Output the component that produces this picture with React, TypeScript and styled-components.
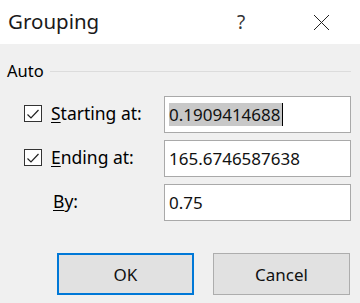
import styled, { createGlobalStyle } from 'styled-components'

const Global = createGlobalStyle`
	html, body {
		margin: 0;
		padding: 0;
		background: #f0f0f0;
	}
	body {
		font-family: 'Noto Sans', 'Open Sans', sans-serif;
		color: #000;
	}
`

const Dialog = styled.div`
	width: 360px;
	height: 303px;
	display: flex;
	flex-direction: column;
	background: #f0f0f0;
	overflow: hidden;
`

const TitleBar = styled.div`
	height: 44px;
	display: flex;
	align-items: center;
	background: #fff;
	padding-left: 8px;
`

const Title = styled.div`
	flex: 1;
	font-size: 20.5px;
	color: #1a1a1a;
	margin-top: -2px;
`

const TitleButton = styled.div`
	width: ${(p: { $w: number }) => p.$w}px;
	height: 44px;
	display: flex;
	align-items: center;
	justify-content: center;
	font-size: 19px;
	color: #333;
`

const Body = styled.div`
	flex: 1;
	display: flex;
	flex-direction: column;
	padding: 16px 9px 0 7px;
`

const Legend = styled.div`
	display: flex;
	align-items: center;
	gap: 6px;
	font-size: 16.5px;
	height: 20px;

	&::after {
		content: '';
		flex: 1;
		height: 1px;
		background: #dcdcdc;
		margin-top: 2px;
	}
`

const Fields = styled.div`
	display: grid;
	grid-template-columns: 17px 18px 122px 187px;
	grid-auto-rows: 37px;
	row-gap: 7px;
	align-items: center;
	margin-top: 16px;
`

const Check = styled.div`
	grid-column: 2;
	width: 16px;
	height: 15px;
	border: 1px solid #333;
	background: #fff;
	display: flex;
	align-items: center;
	justify-content: center;
	margin-bottom: 2px;
`

const Label = styled.div<{ $indent?: number }>`
	grid-column: 3;
	font-size: 17.5px;
	padding-left: ${(p) => 9 + (p.$indent ?? 0)}px;
	margin-bottom: 3px;

	u {
		text-decoration-thickness: 1px;
		text-underline-offset: 2px;
	}
`

const Field = styled.div`
	grid-column: 4;
	height: 37px;
	box-sizing: border-box;
	border: 1px solid #a9a9a9;
	background: #fff;
	display: flex;
	align-items: center;
	padding-left: 4px;
	font-size: 17px;
	color: #111;
`

const Selected = styled.span`
	background: #c8c8c8;
	border-right: 1px solid #000;
	padding-right: 1px;
`

const Buttons = styled.div`
	display: flex;
	justify-content: flex-end;
	gap: 19px;
	margin-top: 32px;
	padding-right: 1px;
`

const Button = styled.div<{ $primary?: boolean }>`
	width: 137px;
	height: 42px;
	box-sizing: border-box;
	background: #e1e1e1;
	border: ${(p) => (p.$primary ? '2px solid #0078d7' : '1px solid #adadad')};
	display: flex;
	align-items: center;
	justify-content: center;
	font-size: 17px;
	color: #111;
`

const Tick = () => (
	<svg width="14" height="12" viewBox="0 0 14 12">
		<path d="M1.5 6.5 L5 10 L12.5 2" fill="none" stroke="#222" strokeWidth="1.2" />
	</svg>
)

const Close = () => (
	<svg width="17" height="17" viewBox="0 0 17 17">
		<path d="M1 1 L16 16 M16 1 L1 16" stroke="#222" strokeWidth="1" />
	</svg>
)

const App = () => (
	<>
		<Global />
		<Dialog>
			<TitleBar>
				<Title>Grouping</Title>
				<TitleButton $w={20}>?</TitleButton>
				<TitleButton $w={47} />
				<TitleButton $w={46}>
					<Close />
				</TitleButton>
				<TitleButton $w={16} />
			</TitleBar>
			<Body>
				<Legend>Auto</Legend>
				<Fields>
					<Check>
						<Tick />
					</Check>
					<Label>
						<u>S</u>tarting at:
					</Label>
					<Field>
						<Selected>0.1909414688</Selected>
					</Field>
					<Check>
						<Tick />
					</Check>
					<Label>
						<u>E</u>nding at:
					</Label>
					<Field>165.6746587638</Field>
					<Label $indent={2}>
						<u>B</u>y:
					</Label>
					<Field>0.75</Field>
				</Fields>
				<Buttons>
					<Button $primary>OK</Button>
					<Button>Cancel</Button>
				</Buttons>
			</Body>
		</Dialog>
	</>
)

export default App
